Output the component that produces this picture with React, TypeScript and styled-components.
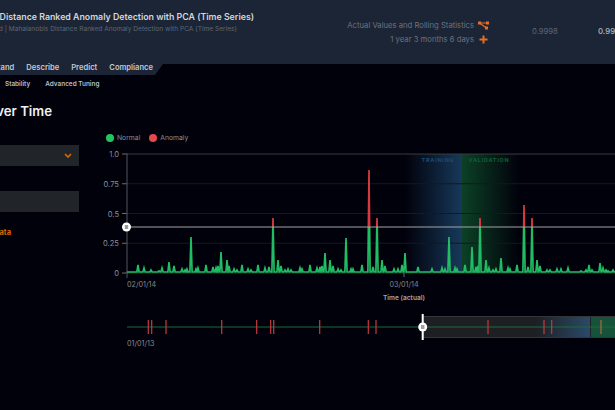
import styled, { createGlobalStyle } from "styled-components";

const GlobalStyle = createGlobalStyle`
    html, body {
        margin: 0;
        padding: 0;
        background: #01010b;
    }
`;

const Page = styled.main`
    width: 615px;
    height: 410px;
    overflow: hidden;
    background: #01010b;
    font-family: Inter, "Liberation Sans", sans-serif;
    color: #fff;
`;

const Header = styled.header`
    height: 64px;
    background: #1b2536;
    display: flex;
    justify-content: space-between;
    box-sizing: border-box;
    padding-top: 10px;
`;

const TitleBlock = styled.div`
    display: flex;
    flex-direction: column;
    gap: 1px;
`;

// keeps the end of a line in place while its start runs off the left edge
const ClippedLine = styled.div<{ $width: number }>`
    width: ${({ $width }) => $width}px;
    display: flex;
    justify-content: flex-end;
    white-space: nowrap;
`;

const Title = styled.span`
    font-size: 8.8px;
    line-height: 13px;
    font-weight: 600;
    color: #d3d6db;
`;

const Subtitle = styled.span`
    font-size: 6.6px;
    line-height: 10px;
    color: #5d6675;
`;

const Stats = styled.div`
    display: flex;
    align-items: center;
    height: 42px;
`;

const Meta = styled.div`
    width: 185px;
    display: flex;
    flex-direction: column;
    align-items: flex-end;
    gap: 3px;
    padding-top: 2px;
`;

const MetaRow = styled.div`
    display: flex;
    align-items: center;
    justify-content: flex-end;
    gap: 3px;
    height: 11px;
    font-size: 7.7px;
    color: #6b7280;
    white-space: nowrap;
`;

const IconSlot = styled.span`
    width: 12px;
    display: flex;
    justify-content: center;
`;

const Score = styled.div<{ $strong?: boolean }>`
    width: ${({ $strong }) => ($strong ? "17px" : "24px")};
    margin-left: ${({ $strong }) => ($strong ? "42px" : "43px")};
    font-size: 7.7px;
    font-weight: ${({ $strong }) => ($strong ? 600 : 400)};
    color: ${({ $strong }) => ($strong ? "#a4a9b2" : "#5f6774")};
    overflow: ${({ $strong }) => ($strong ? "hidden" : "visible")};
`;

const NavStrip = styled.nav`
    width: 163px;
    height: 17px;
    margin-top: -6px;
    padding-top: 4px;
    box-sizing: border-box;
    position: relative;
    background: #1b2536;
    clip-path: polygon(0 0, 100% 0, 100% 35%, 155px 100%, 0 100%);
    display: flex;
`;

const NavTabs = styled.div`
    width: 153px;
    display: flex;
    justify-content: flex-end;
    gap: 12px;
    white-space: nowrap;
    font-size: 7.6px;
    line-height: 11px;
    font-weight: 600;
    color: #c4c8ce;
`;

const SubTabs = styled.div`
    display: flex;
    gap: 15px;
    padding: 4px 0 0 5px;
    height: 15px;
    box-sizing: border-box;
    font-size: 6.4px;
    line-height: 11px;
    font-weight: 600;
    color: #b8bcc2;
`;

const Heading = styled.h1`
    margin: 11px 0 0;
    font-size: 13.2px;
    line-height: 20px;
    font-weight: 600;
    color: #f0f1f3;
`;

const Body = styled.div`
    display: flex;
    gap: 21px;
    margin-top: 9px;
`;

const Sidebar = styled.aside`
    width: 79px;
    display: flex;
    flex-direction: column;
    padding-top: 15px;
`;

const Field = styled.div<{ $gap: number }>`
    height: 21px;
    margin-bottom: ${({ $gap }) => $gap}px;
    background: #212429;
    display: flex;
    align-items: center;
    justify-content: flex-end;
    padding-right: 7px;
    box-sizing: border-box;
`;

const DataLink = styled.span`
    font-size: 7.5px;
    line-height: 10px;
    font-weight: 700;
    color: #d96a00;
`;

const ChartColumn = styled.section`
    width: 515px;
    display: flex;
    flex-direction: column;
`;

const Legend = styled.div`
    display: flex;
    align-items: center;
    height: 15px;
    padding-left: 6px;
    font-size: 6.8px;
    color: #8b8f96;
`;

const LegendItem = styled.span<{ $color: string }>`
    display: flex;
    align-items: center;
    gap: 3px;
    margin-right: 9px;

    &::before {
        content: "";
        width: 8px;
        height: 8px;
        border-radius: 50%;
        background: ${({ $color }) => $color};
    }
`;

const ChartSvg = styled.svg`
    display: block;
    font-family: Inter, "Liberation Sans", sans-serif;
`;

const BASE_Y = 272;
const ZERO_Y = 273;
const THRESHOLD_Y = 227;

// [x, top y] of each peak, in page pixels
const peaks: [number, number][] = [
    [138, 265], [144, 268], [151, 270], [159, 271], [162, 268], [169, 262], [174, 266], [182, 269], [185, 270],
    [187, 269], [191, 237], [196, 269], [198, 268], [206, 265], [213, 267], [216, 268], [218, 266], [221, 252],
    [227, 260], [229, 266], [234, 269], [237, 270], [242, 265], [248, 269], [251, 270], [258, 265], [265, 268],
    [269, 267], [273, 218], [278, 260], [281, 266], [285, 270], [288, 269], [291, 270], [300, 268], [302, 269],
    [310, 265], [317, 268], [320, 267], [322, 266], [325, 253], [330, 260], [333, 266], [338, 269], [341, 270],
    [346, 238], [351, 269], [353, 269], [362, 265], [369, 170], [373, 267], [377, 218], [382, 260], [385, 266],
    [394, 269], [398, 269], [402, 265], [405, 253], [418, 267], [432, 269], [442, 268], [445, 269], [449, 237],
    [455, 268], [457, 269], [465, 265], [472, 247], [476, 267], [478, 266], [480, 218], [486, 260], [489, 268],
    [493, 270], [496, 269], [501, 258], [508, 268], [510, 269], [517, 265], [524, 205], [528, 267], [532, 218],
    [537, 260], [540, 266], [547, 270], [550, 270], [557, 269], [561, 269], [568, 268], [581, 271], [586, 270],
    [589, 265], [592, 270], [600, 263], [603, 268], [606, 270], [608, 271], [613, 270],
];

const linePath = `M127 ${BASE_Y} ` + peaks
    .map(([x, top]) => `L${x - 1.1} ${BASE_Y} L${x} ${top} L${x + 1.1} ${BASE_Y}`)
    .join(" ") + ` L615 ${BASE_Y}`;

const yTicks: [string, number, string][] = [
    ["1.0", 154, "#3b3d3f"],
    ["0.75", 183.75, "#16181f"],
    ["0.5", 213.5, "#16181f"],
    ["0.25", 243.25, "#16181f"],
    ["0", 273, "#2c2e31"],
];

const anomalyTicks = [148.3, 151.7, 166, 221.7, 256.7, 270.7, 273.7, 319.7, 368.3, 376, 488, 544, 551.7, 601];

const MainChart = () => (
    <ChartSvg width={515} height={160} viewBox="100 145 515 160">
        <defs>
            <linearGradient id="trainBand" x1="0" x2="1" y1="0" y2="0">
                <stop offset="0" stopColor="#17395a" stopOpacity={0} />
                <stop offset="1" stopColor="#17395a" />
            </linearGradient>
            <linearGradient id="validBand" x1="0" x2="1" y1="0" y2="0">
                <stop offset="0" stopColor="#0c4126" />
                <stop offset="1" stopColor="#0c4126" stopOpacity={0} />
            </linearGradient>
            <clipPath id="aboveLine">
                <rect x="100" y="145" width="515" height={THRESHOLD_Y - 145} />
            </clipPath>
            <clipPath id="belowLine">
                <rect x="100" y={THRESHOLD_Y} width="515" height={60} />
            </clipPath>
        </defs>

        <rect x="405" y="154" width="57" height="119" fill="url(#trainBand)" />
        <rect x="462" y="154" width="57" height="119" fill="url(#validBand)" />

        {yTicks.map(([label, y, color]) => (
            <g key={label}>
                <line x1="127" x2="615" y1={y} y2={y} stroke={color} />
                <line x1="122" x2="127" y1={y} y2={y} stroke="#6a6c70" />
                <text x="119" y={y + 3} textAnchor="end" fontSize="7.6" fill="#8b8e93">{label}</text>
            </g>
        ))}
        <line x1="127" x2="127" y1="153.5" y2={ZERO_Y + 5} stroke="#55575a" />

        <text x="438" y="162" textAnchor="middle" fontSize="5.4" fontWeight="700" letterSpacing="0.8" fill="#1f4a70">TRAINING</text>
        <text x="489" y="162" textAnchor="middle" fontSize="5.4" fontWeight="700" letterSpacing="0.8" fill="#0f6136">VALIDATION</text>

        <path d={linePath} fill="none" stroke="#d8393f" strokeWidth="1.7" clipPath="url(#aboveLine)" />
        <path d={linePath} fill="none" stroke="#21bd64" strokeWidth="1.7" clipPath="url(#belowLine)" />

        <line x1="127" x2="615" y1={THRESHOLD_Y} y2={THRESHOLD_Y} stroke="#a3a4a6" />
        <circle cx="126.5" cy={THRESHOLD_Y} r="4.5" fill="#fff" />
        <rect x="124.8" y={THRESHOLD_Y - 2} width="3.4" height="4" fill="#9a9a9a" />

        <line x1="404" x2="404" y1={ZERO_Y} y2={ZERO_Y + 4} stroke="#6a6c70" />
        <text x="127" y="287" fontSize="7.2" fill="#85888d">02/01/14</text>
        <text x="404" y="287" textAnchor="middle" fontSize="7.2" fill="#85888d">03/01/14</text>
        <text x="404" y="300" textAnchor="middle" fontSize="6.6" fontWeight="600" fill="#a2a5a9">Time (actual)</text>
    </ChartSvg>
);

const Timeline = () => (
    <ChartSvg width={515} height={45} viewBox="100 305 515 45">
        <defs>
            <linearGradient id="trainBrush" x1="0" x2="1" y1="0" y2="0">
                <stop offset="0" stopColor="#2a4a68" stopOpacity={0} />
                <stop offset="1" stopColor="#2a4a68" />
            </linearGradient>
        </defs>
        <rect x="423" y="316.5" width="193" height="21" fill="#1d1f22" stroke="#333538" />
        <rect x="535" y="317" width="55" height="20" fill="url(#trainBrush)" />
        <rect x="591" y="317" width="24" height="20" fill="#17533a" />
        <line x1="127" x2="615" y1="327" y2="327" stroke="#1c6a3c" strokeWidth="1.2" />
        {anomalyTicks.map((x) => (
            <line key={x} x1={x} x2={x} y1="320" y2="334" stroke={x === 601 ? "#b06a3f" : "#c9393f"} strokeWidth="1.2" />
        ))}
        <line x1="422.7" x2="422.7" y1="314" y2="340" stroke="#fff" strokeWidth="2" />
        <circle cx="422.7" cy="327" r="4.5" fill="#fff" />
        <rect x="421" y="325" width="3.4" height="4" fill="#a0a0a0" />
        <text x="127" y="346" fontSize="7.2" fill="#85888d">01/01/13</text>
    </ChartSvg>
);

const ChevronIcon = () => (
    <svg width="8" height="5" viewBox="0 0 8 5">
        <path d="M1 1 L4 4 L7 1" fill="none" stroke="#d96a00" strokeWidth="1.6" />
    </svg>
);

const NodesIcon = () => (
    <svg width="11" height="9" viewBox="0 0 11 9">
        <path d="M1.5 2 H9.5 M1.5 2 L8.5 7" fill="none" stroke="#e0702a" strokeWidth="1.2" />
        <rect x="0" y="0.5" width="3" height="3" fill="#e0702a" />
        <rect x="8" y="0.5" width="3" height="3" fill="#e0702a" />
        <rect x="7" y="5.5" width="3" height="3" fill="#e0702a" />
    </svg>
);

const PlusIcon = () => (
    <svg width="9" height="9" viewBox="0 0 9 9">
        <path d="M4.5 0.5 V8.5 M0.5 4.5 H8.5" fill="none" stroke="#e0702a" strokeWidth="2" />
    </svg>
);

export default function App() {
    return (
        <Page>
            <GlobalStyle />
            <Header>
                <TitleBlock>
                    <ClippedLine $width={254}>
                        <Title>Mahalanobis Distance Ranked Anomaly Detection with PCA (Time Series)</Title>
                    </ClippedLine>
                    <ClippedLine $width={237}>
                        <Subtitle>Advanced | Mahalanobis Distance Ranked Anomaly Detection with PCA (Time Series)</Subtitle>
                    </ClippedLine>
                </TitleBlock>
                <Stats>
                    <Meta>
                        <MetaRow>
                            Actual Values and Rolling Statistics
                            <IconSlot><NodesIcon /></IconSlot>
                        </MetaRow>
                        <MetaRow>
                            1 year 3 months 6 days
                            <IconSlot><PlusIcon /></IconSlot>
                        </MetaRow>
                    </Meta>
                    <Score>0.9998</Score>
                    <Score $strong>0.9998</Score>
                </Stats>
            </Header>
            <NavStrip>
                <NavTabs>
                    <span>Understand</span>
                    <span>Describe</span>
                    <span>Predict</span>
                    <span>Compliance</span>
                </NavTabs>
            </NavStrip>
            <SubTabs>
                <span>Stability</span>
                <span>Advanced Tuning</span>
            </SubTabs>
            <ClippedLine $width={52}>
                <Heading>Anomaly Over Time</Heading>
            </ClippedLine>
            <Body>
                <Sidebar>
                    <Field $gap={25}><ChevronIcon /></Field>
                    <Field $gap={16} />
                    <ClippedLine $width={11}>
                        <DataLink>Show Data</DataLink>
                    </ClippedLine>
                </Sidebar>
                <ChartColumn>
                    <Legend>
                        <LegendItem $color="#22c55e">Normal</LegendItem>
                        <LegendItem $color="#e5484d">Anomaly</LegendItem>
                    </Legend>
                    <MainChart />
                    <Timeline />
                </ChartColumn>
            </Body>
        </Page>
    );
}
